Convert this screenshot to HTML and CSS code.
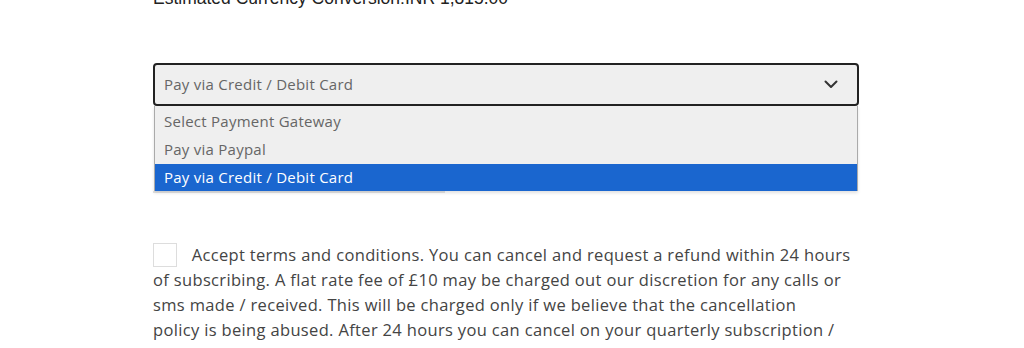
FILE: index.html
```html
<!DOCTYPE html>
<html lang="en">

<head>
    <meta charset="UTF-8">
    <title>Checkout</title>
    <link rel="stylesheet" href="styles.css">
</head>

<body>
    <div class="checkout">
        <p class="currency">Estimated Currency Conversion:INR 1,815.00</p>

        <!-- Payment gateway select (open) -->
        <div class="gateway">
            <div class="select-box">
                <span>Pay via Credit / Debit Card</span>
                <svg class="chevron" width="14" height="9" viewBox="0 0 14 9">
                    <path d="M1.5 1.5 L7 7 L12.5 1.5" fill="none" stroke="#333" stroke-width="2" stroke-linecap="round" stroke-linejoin="round" />
                </svg>
            </div>
            <ul class="options">
                <li>Select Payment Gateway</li>
                <li>Pay via Paypal</li>
                <li class="selected">Pay via Credit / Debit Card</li>
            </ul>
            <div class="card-field"></div>
        </div>

        <!-- Terms -->
        <div class="terms">
            <span class="checkbox"></span>
            Accept terms and conditions. You can cancel and request a refund within 24 hours of subscribing. A flat rate fee of £10 may be charged out our discretion for any calls or sms made / received. This will be charged only if we believe that the cancellation<br>
            policy is being abused. After 24 hours you can cancel on your quarterly subscription / and we will stop billing you at the end of your current period.
        </div>
    </div>
</body>

</html>
```

FILE: styles.css
```css
body {
    margin: 0;
    background: #fff;
    font-family: "Open Sans", sans-serif;
    color: #444;
    overflow: hidden;
}

.checkout {
    width: 706px;
    margin-left: 153px;
}

.currency {
    font-family: "Liberation Sans", Arial, sans-serif;
    font-size: 17.5px;
    line-height: 20px;
    color: #222;
    margin: -12px 0 0 0;
}

/* Gateway select */
.gateway {
    position: relative;
    margin-top: 55px;
    height: 136px;
}

.select-box {
    box-sizing: border-box;
    height: 43px;
    border: 2px solid #222;
    border-radius: 4px;
    background: #efefef;
    display: flex;
    align-items: center;
    justify-content: space-between;
    padding: 0 19px 1px 9px;
    font-size: 15px;
    letter-spacing: 0.25px;
    color: #666;
}

.chevron {
    display: block;
}

.options {
    position: absolute;
    top: 43px;
    left: 1px;
    right: 1px;
    margin: 0;
    padding: 2px 0 0 0;
    list-style: none;
    background: #efefef;
    border-left: 1px solid #aaa;
    border-right: 1px solid #aaa;
    box-shadow: 0 2px 3px rgba(0, 0, 0, 0.12);
    font-size: 15px;
    letter-spacing: 0.25px;
    color: #666;
    z-index: 2;
}

.options li {
    height: 28px;
    line-height: 27px;
    padding-left: 9px;
}

.options li.selected {
    background: #1a66cf;
    color: #fff;
    height: 27px;
}

.card-field {
    position: absolute;
    top: 128px;
    left: 0;
    width: 292px;
    height: 2px;
    background: #e4e4e4;
}

/* Terms */
.terms {
    margin-top: 43px;
    font-size: 16.5px;
    letter-spacing: 0.34px;
    line-height: 25px;
    color: #444;
}

.checkbox {
    display: inline-block;
    box-sizing: border-box;
    width: 24px;
    height: 24px;
    border: 1px solid #ddd;
    background: #fff;
    vertical-align: -6px;
    margin-right: 10px;
}
```
